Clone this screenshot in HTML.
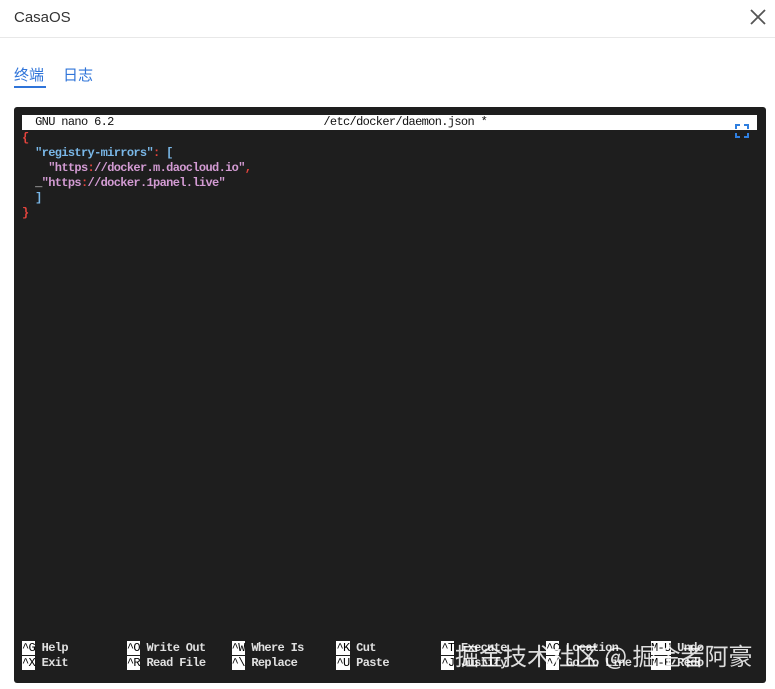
<!DOCTYPE html>
<html><head><meta charset="utf-8"><style>
*{margin:0;padding:0;box-sizing:border-box}
body{width:775px;height:689px;background:#fff;font-family:"Liberation Sans","Noto Sans CJK SC",sans-serif;position:relative;overflow:hidden}
.hdr{position:absolute;left:0;top:0;width:775px;height:38px;border-bottom:1px solid #e8e8e8}
.title{position:absolute;left:14px;top:9px;font-size:15px;color:#333}
.close{position:absolute;left:749px;top:8px}
.tab{position:absolute;top:64px;font-size:15px;color:#2f74d9;font-family:"Noto Sans CJK SC",sans-serif}
.ul{position:absolute;left:14px;top:86px;width:32px;height:2px;background:#2f74d9}
.term{position:absolute;left:14px;top:107px;width:752px;height:576px;background:#1e1e1e;border-radius:3px}
pre{position:absolute;font-family:"Liberation Mono",monospace;font-size:12px;letter-spacing:-0.65px;line-height:15px;color:#e0e0e0;white-space:pre;font-weight:bold}
.bar{position:absolute;left:22px;top:115px;width:735px;height:15px;background:#fff}
.r{color:#e5443d}.b{color:#7ab8e8}.p{color:#d39bd3}
.k{background:#fff;color:#000;font-weight:normal}
.wm{position:absolute;left:455px;top:637px;font-size:24px;color:rgba(255,255,255,0.85);font-family:"Noto Sans CJK SC",sans-serif;white-space:nowrap}
</style></head><body>
<div class="hdr"><div class="title">CasaOS</div>
<svg class="close" width="18" height="18" viewBox="0 0 18 18"><path d="M2 2L16 16M16 2L2 16" stroke="#555" stroke-width="1.8"/></svg></div>
<div class="tab" style="left:14px">终端</div>
<div class="tab" style="left:63px">日志</div>
<div class="ul"></div>
<div class="term"></div>
<div class="bar"></div>
<pre style="left:22px;top:115px;color:#111;font-weight:normal">  GNU nano 6.2                                /etc/docker/daemon.json *</pre>
<svg style="position:absolute;left:735px;top:124px" width="14" height="14" viewBox="0 0 14 14"><path d="M1 5V1H5M9 1H13V5M13 9V13H9M5 13H1V9" stroke="#2f7fe0" stroke-width="2" fill="none"/></svg>
<pre style="left:22px;top:131px"><span class="r">{</span>
  <span class="b">"registry-mirrors"</span><span class="r">:</span> <span class="b">[</span>
    <span class="p">"https</span><span class="r">:</span><span class="p">//docker.m.daocloud.io"</span><span class="r">,</span>
  _<span class="p">"https</span><span class="r">:</span><span class="p">//docker.1panel.live"</span>
  <span class="b">]</span>
<span class="r">}</span></pre>
<pre style="left:22px;top:641px"><span class="k">^G</span> Help         <span class="k">^O</span> Write Out    <span class="k">^W</span> Where Is     <span class="k">^K</span> Cut          <span class="k">^T</span> Execute      <span class="k">^C</span> Location     <span class="k">M-U</span> Undo
<span class="k">^X</span> Exit         <span class="k">^R</span> Read File    <span class="k">^\</span> Replace      <span class="k">^U</span> Paste        <span class="k">^J</span> Justify      <span class="k">^/</span> Go To Line   <span class="k">M-E</span> Redo</pre>
<div class="wm">掘金技术社区 @ 掘金者阿豪</div>
</body></html>
